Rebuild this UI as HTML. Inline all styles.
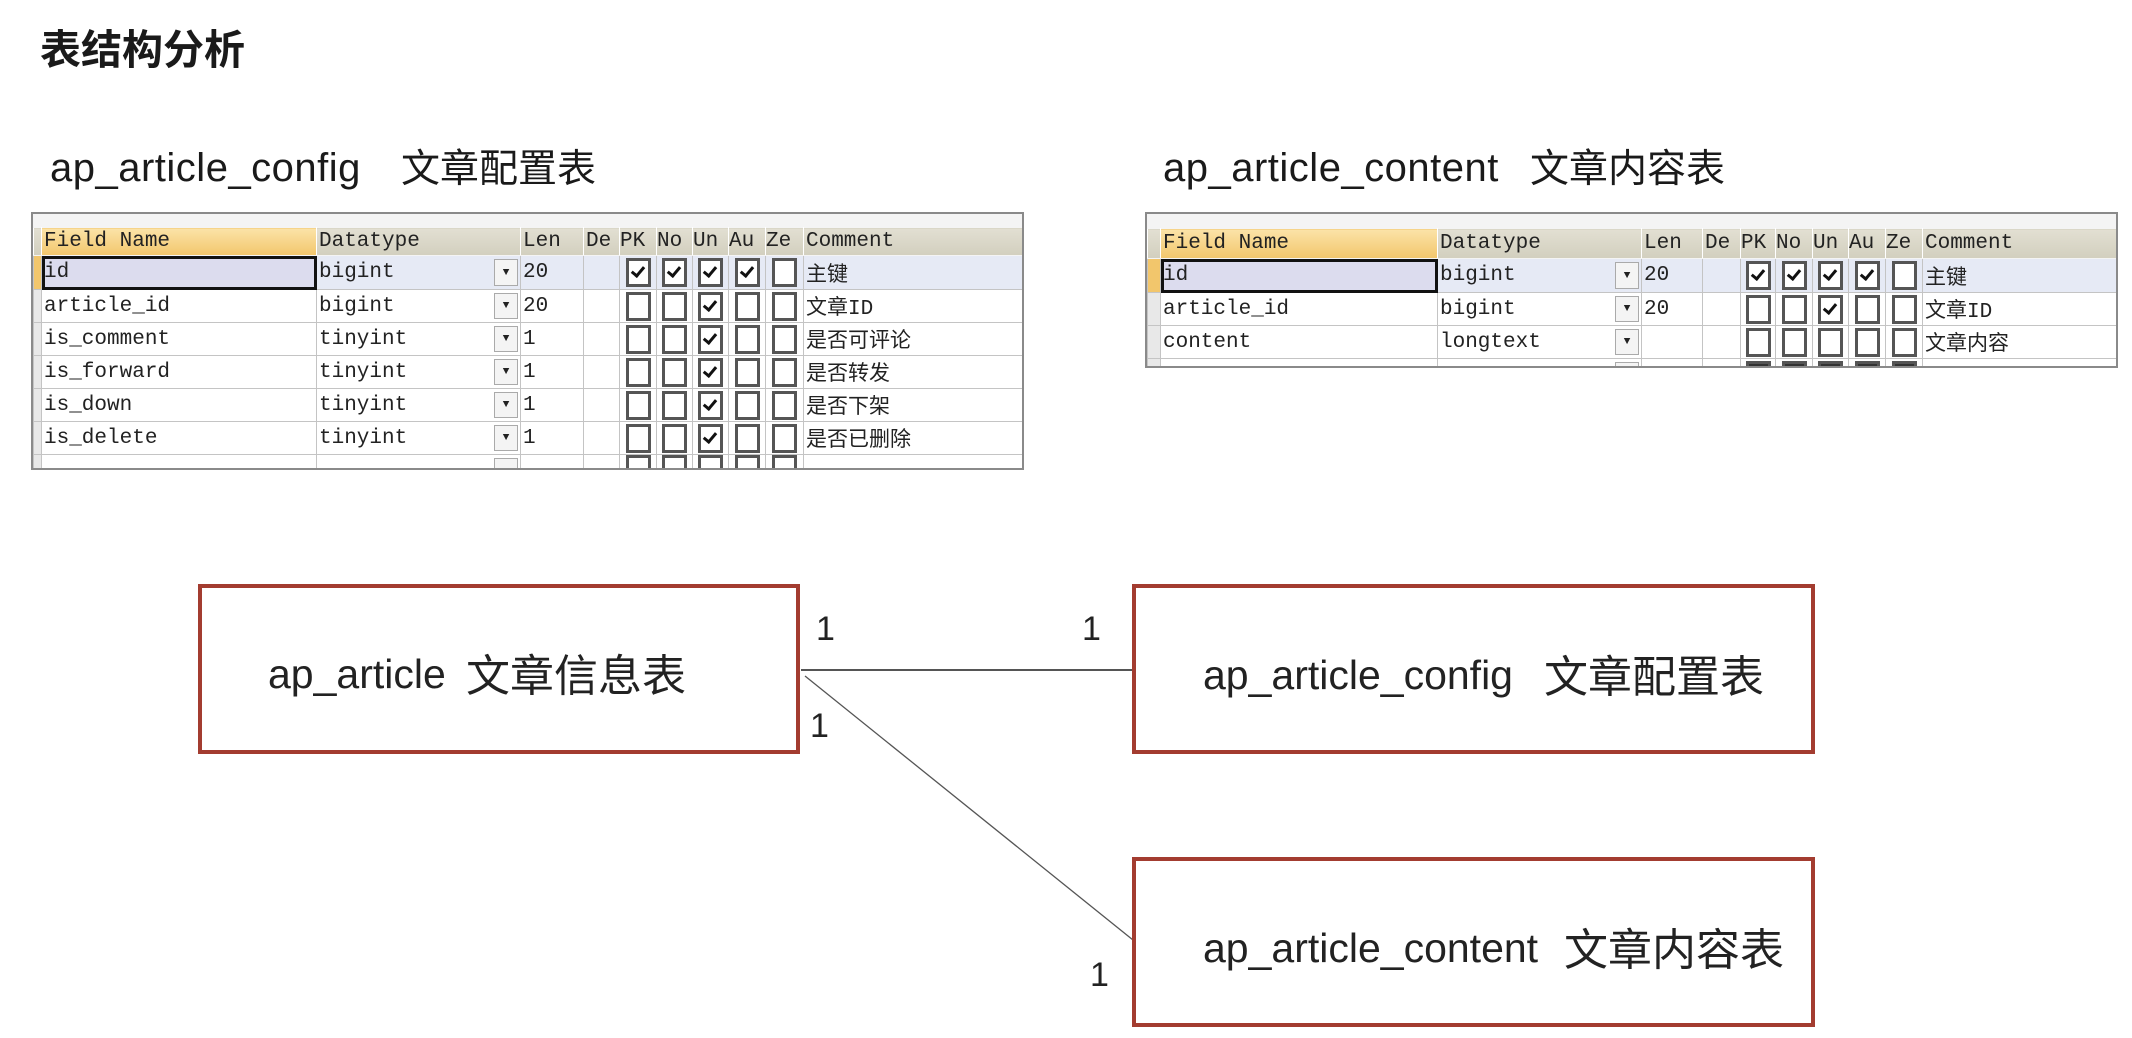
<!DOCTYPE html>
<html><head><meta charset="utf-8">
<style>
html,body{margin:0;padding:0;background:#fff;width:2132px;height:1038px;overflow:hidden;position:relative;font-family:"Liberation Sans","Noto Sans CJK SC",sans-serif;color:#222}
.abs{position:absolute;white-space:nowrap}
.title{left:40px;top:16px;font-size:41px;font-weight:bold;color:#1a1a1a}
.h2{font-size:39px;color:#1a1a1a}
.h2 .l{font-size:40px;letter-spacing:0.5px}
.tbl{position:absolute;border:2px solid #8a8a8a;background:#f4f4f4;box-sizing:border-box}
table{border-collapse:collapse;table-layout:fixed;position:absolute;left:0;font-family:"Liberation Mono","Noto Sans CJK SC",monospace;font-size:21px;color:#222}
td{border:1px solid #c4c4c4;padding:0 0 0 2px;overflow:hidden;white-space:nowrap;position:relative;background:#fff}
tr.hd td{background:linear-gradient(#e2dfd2,#d2cfbe);border-color:#f4f4f4 #fff}
tr.hd td.fn{background:linear-gradient(#fbe3a8,#f2c66c)}
td.rh{background:#e8e8e8;padding:0}
tr.r1 td{background:#e6eaf5}
tr.r1 td.rh{background:#f2c66c}
tr.r1 td.sel{background:#dcdcee;outline:3px solid #111;outline-offset:-3px}
td.dt{padding-right:0}
.dd{position:absolute;right:2px;top:3px;bottom:3px;width:22px;border:1px solid #aaa;background:#f4f4f4;font-size:11px;text-align:center;display:flex;align-items:center;justify-content:center}
td.c{text-align:center;padding:0}
.cb{display:inline-block;width:19px;height:23px;border:3px solid #555;background:#fff;vertical-align:middle;position:relative}
.cb.k::after{content:"";position:absolute;left:5px;top:3px;width:5px;height:10px;border:solid #111;border-width:0 3px 3px 0;transform:rotate(40deg)}
.box{position:absolute;border:4px solid #a33c30;box-sizing:border-box;background:#fff}
.bt{font-size:44px;color:#222}
.bt .l{font-size:41px;position:absolute;left:0;top:11px}
.bt .c{position:absolute;top:0}
.one{font-size:34px;color:#222}
</style></head><body>
<div class="abs title">表结构分析</div>
<div class="abs h2" style="left:50px;top:146px"><span class="l">ap_article_config</span></div>
<div class="abs h2" style="left:401px;top:138px">文章配置表</div>
<div class="abs h2" style="left:1163px;top:146px"><span class="l">ap_article_content</span></div>
<div class="abs h2" style="left:1530px;top:138px">文章内容表</div>

<div class="tbl" style="left:31px;top:212px;width:993px;height:258px;overflow:hidden">
<table style="top:13px;width:990px">
<colgroup><col style="width:8px"><col style="width:275px"><col style="width:204px"><col style="width:63px"><col style="width:36px"><col style="width:37px"><col style="width:36px"><col style="width:36px"><col style="width:37px"><col style="width:38px"><col style="width:220px"></colgroup>
<tr class="hd" style="height:28px"><td class="rh"></td><td class="fn">Field Name</td><td>Datatype</td><td>Len</td><td>De</td><td style="padding:0">PK</td><td style="padding:0">No</td><td style="padding:0">Un</td><td style="padding:0">Au</td><td style="padding:0">Ze</td><td>Comment</td></tr>
<tr class="r1" style="height:34px"><td class="rh"></td><td class="sel">id</td><td class="dt">bigint<span class="dd">▼</span></td><td>20</td><td></td><td class="c"><span class="cb k"></span></td><td class="c"><span class="cb k"></span></td><td class="c"><span class="cb k"></span></td><td class="c"><span class="cb k"></span></td><td class="c"><span class="cb"></span></td><td>主键</td></tr>
<tr style="height:33px"><td class="rh"></td><td>article_id</td><td class="dt">bigint<span class="dd">▼</span></td><td>20</td><td></td><td class="c"><span class="cb"></span></td><td class="c"><span class="cb"></span></td><td class="c"><span class="cb k"></span></td><td class="c"><span class="cb"></span></td><td class="c"><span class="cb"></span></td><td>文章ID</td></tr>
<tr style="height:33px"><td class="rh"></td><td>is_comment</td><td class="dt">tinyint<span class="dd">▼</span></td><td>1</td><td></td><td class="c"><span class="cb"></span></td><td class="c"><span class="cb"></span></td><td class="c"><span class="cb k"></span></td><td class="c"><span class="cb"></span></td><td class="c"><span class="cb"></span></td><td>是否可评论</td></tr>
<tr style="height:33px"><td class="rh"></td><td>is_forward</td><td class="dt">tinyint<span class="dd">▼</span></td><td>1</td><td></td><td class="c"><span class="cb"></span></td><td class="c"><span class="cb"></span></td><td class="c"><span class="cb k"></span></td><td class="c"><span class="cb"></span></td><td class="c"><span class="cb"></span></td><td>是否转发</td></tr>
<tr style="height:33px"><td class="rh"></td><td>is_down</td><td class="dt">tinyint<span class="dd">▼</span></td><td>1</td><td></td><td class="c"><span class="cb"></span></td><td class="c"><span class="cb"></span></td><td class="c"><span class="cb k"></span></td><td class="c"><span class="cb"></span></td><td class="c"><span class="cb"></span></td><td>是否下架</td></tr>
<tr style="height:33px"><td class="rh"></td><td>is_delete</td><td class="dt">tinyint<span class="dd">▼</span></td><td>1</td><td></td><td class="c"><span class="cb"></span></td><td class="c"><span class="cb"></span></td><td class="c"><span class="cb k"></span></td><td class="c"><span class="cb"></span></td><td class="c"><span class="cb"></span></td><td>是否已删除</td></tr>
<tr style="height:33px;vertical-align:top"><td class="rh"></td><td></td><td class="dt"><span class="dd"></span></td><td></td><td></td><td class="c"><span class="cb"></span></td><td class="c"><span class="cb"></span></td><td class="c"><span class="cb"></span></td><td class="c"><span class="cb"></span></td><td class="c"><span class="cb"></span></td><td></td></tr>
</table></div>

<div class="tbl" style="left:1145px;top:212px;width:973px;height:156px;overflow:hidden">
<table style="top:14px;width:971px">
<colgroup><col style="width:13px"><col style="width:277px"><col style="width:204px"><col style="width:61px"><col style="width:38px"><col style="width:35px"><col style="width:37px"><col style="width:36px"><col style="width:37px"><col style="width:37px"><col style="width:196px"></colgroup>
<tr class="hd" style="height:30px"><td class="rh"></td><td class="fn">Field Name</td><td>Datatype</td><td>Len</td><td>De</td><td style="padding:0">PK</td><td style="padding:0">No</td><td style="padding:0">Un</td><td style="padding:0">Au</td><td style="padding:0">Ze</td><td>Comment</td></tr>
<tr class="r1" style="height:34px"><td class="rh"></td><td class="sel">id</td><td class="dt">bigint<span class="dd">▼</span></td><td>20</td><td></td><td class="c"><span class="cb k"></span></td><td class="c"><span class="cb k"></span></td><td class="c"><span class="cb k"></span></td><td class="c"><span class="cb k"></span></td><td class="c"><span class="cb"></span></td><td>主键</td></tr>
<tr style="height:33px"><td class="rh"></td><td>article_id</td><td class="dt">bigint<span class="dd">▼</span></td><td>20</td><td></td><td class="c"><span class="cb"></span></td><td class="c"><span class="cb"></span></td><td class="c"><span class="cb k"></span></td><td class="c"><span class="cb"></span></td><td class="c"><span class="cb"></span></td><td>文章ID</td></tr>
<tr style="height:33px"><td class="rh"></td><td>content</td><td class="dt">longtext<span class="dd">▼</span></td><td></td><td></td><td class="c"><span class="cb"></span></td><td class="c"><span class="cb"></span></td><td class="c"><span class="cb"></span></td><td class="c"><span class="cb"></span></td><td class="c"><span class="cb"></span></td><td>文章内容</td></tr>
<tr style="height:33px"><td class="rh"></td><td></td><td class="dt"><span class="dd"></span></td><td></td><td></td><td class="c"><span class="cb" style="background:#333"></span></td><td class="c"><span class="cb" style="background:#333"></span></td><td class="c"><span class="cb" style="background:#333"></span></td><td class="c"><span class="cb" style="background:#333"></span></td><td class="c"><span class="cb" style="background:#333"></span></td><td></td></tr>
</table></div>

<svg class="abs" style="left:0;top:0" width="2132" height="1038">
<line x1="801" y1="670" x2="1133" y2="670" stroke="#555" stroke-width="2"/>
<line x1="805" y1="676" x2="1133" y2="940" stroke="#555" stroke-width="1.3"/>
</svg>

<div class="box" style="left:198px;top:584px;width:602px;height:170px"></div>
<div class="box" style="left:1132px;top:584px;width:683px;height:170px"></div>
<div class="box" style="left:1132px;top:857px;width:683px;height:170px"></div>

<div class="abs bt" style="left:268px;top:640px"><span class="l">ap_article</span><span class="c" style="left:198px">文章信息表</span></div>
<div class="abs bt" style="left:1203px;top:641px"><span class="l">ap_article_config</span><span class="c" style="left:341px">文章配置表</span></div>
<div class="abs bt" style="left:1203px;top:914px"><span class="l">ap_article_content</span><span class="c" style="left:361px">文章内容表</span></div>

<div class="abs one" style="left:816px;top:610px">1</div>
<div class="abs one" style="left:1082px;top:610px">1</div>
<div class="abs one" style="left:810px;top:707px">1</div>
<div class="abs one" style="left:1090px;top:956px">1</div>
</body></html>
